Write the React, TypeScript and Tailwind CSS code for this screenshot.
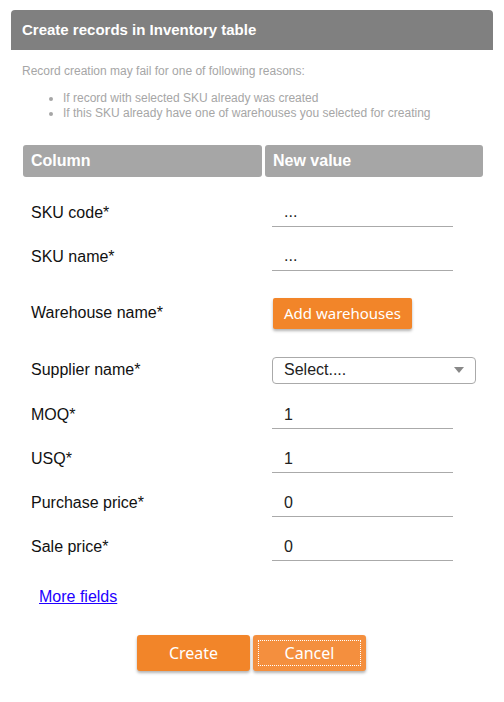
import { useState } from "react";

// Campos del formulario
const fields = [
  { label: "SKU code*", kind: "text", value: "...", h: "h-[44px]" },
  { label: "SKU name*", kind: "text", value: "...", h: "h-[44px]" },
  { label: "Warehouse name*", kind: "button", value: "", h: "h-[68px]" },
  { label: "Supplier name*", kind: "select", value: "", h: "h-[46px]" },
  { label: "MOQ*", kind: "num", value: "1", h: "h-[44px]" },
  { label: "USQ*", kind: "num", value: "1", h: "h-[44px]" },
  { label: "Purchase price*", kind: "num", value: "0", h: "h-[44px]" },
  { label: "Sale price*", kind: "num", value: "0", h: "h-[44px]" },
];

function App() {
  const [values, setValues] = useState(fields.map((f) => f.value));

  return (
    <div className="w-[504px] h-[702px] bg-white font-['Liberation_Sans',Arial,sans-serif] pt-[10px]">
      <div className="mx-[11px] h-[40px] bg-[#808080] rounded-t-[4px] flex items-center px-[11px]">
        <h1 className="text-white font-bold text-[15px]">Create records in Inventory table</h1>
      </div>

      <div className="px-[22px] pt-[14px] text-[12px] text-[#a6a6a6] leading-[15px]">
        <p>Record creation may fail for one of following reasons:</p>
        <ul className="list-disc pl-[41px] mt-[12px]">
          <li>If record with selected SKU already was created</li>
          <li>If this SKU already have one of warehouses you selected for creating</li>
        </ul>
      </div>

      <div className="mx-[23px] mt-[24px] w-[460px]">
        <div className="flex gap-[3px] h-[32px]">
          <div className="w-[239px] bg-[#a6a6a6] rounded-[3px] flex items-center px-[8px] text-white font-bold text-[16px]">
            Column
          </div>
          <div className="flex-1 bg-[#a6a6a6] rounded-[3px] flex items-center px-[8px] text-white font-bold text-[16px]">
            New value
          </div>
        </div>

        <div className="mt-[14px]">
          {fields.map((f, i) => (
            <div key={f.label} className={`flex items-center ${f.h}`}>
              <div className="w-[249px] pl-[8px] text-[16px] text-[#111]">{f.label}</div>
              {f.kind === "button" ? (
                <button className="h-[31px] px-[11px] bg-[#f28529] text-white text-[15px] rounded-[2px] shadow-[0_2px_3px_rgba(0,0,0,0.3)] font-['Noto_Sans',sans-serif] ml-[1px]">
                  Add warehouses
                </button>
              ) : f.kind === "select" ? (
                <div className="w-[204px] h-[27px] border border-[#aaa] rounded-[4px] flex items-center justify-between px-[11px] text-[16px] text-[#222]">
                  <span>Select....</span>
                  <svg width="10" height="6" viewBox="0 0 10 6">
                    <path d="M0 0 L10 0 L5 6 Z" fill="#888" />
                  </svg>
                </div>
              ) : (
                <input
                  value={values[i]}
                  onChange={(e) => {
                    const v = [...values];
                    v[i] = e.currentTarget.value;
                    setValues(v);
                  }}
                  className={`w-[181px] h-[26px] mt-[1px] border-b border-[#aaa] outline-none px-[12px] text-[16px] text-[#222] ${f.kind === "text" ? "pb-[2px]" : ""}`}
                />
              )}
            </div>
          ))}
        </div>

        <div className="mt-[16px] pl-[16px]">
          <a href="#" className="text-[16px] text-[#2200ff] underline">More fields</a>
        </div>
      </div>

      <div className="flex justify-center gap-[3px] mt-[26px] pr-[1px]">
        <button className="w-[113px] h-[36px] bg-[#f28529] text-white text-[16px] rounded-[3px] shadow-[0_2px_3px_rgba(0,0,0,0.3)] font-['Noto_Sans',sans-serif]">
          Create
        </button>
        <button className="w-[113px] h-[36px] bg-[#f48f3e] text-white text-[16px] rounded-[3px] shadow-[0_2px_3px_rgba(0,0,0,0.3)] font-['Noto_Sans',sans-serif] p-[5px]">
          <span className="flex items-center justify-center w-full h-full border border-dotted border-white">Cancel</span>
        </button>
      </div>
    </div>
  );
}

export default App;
